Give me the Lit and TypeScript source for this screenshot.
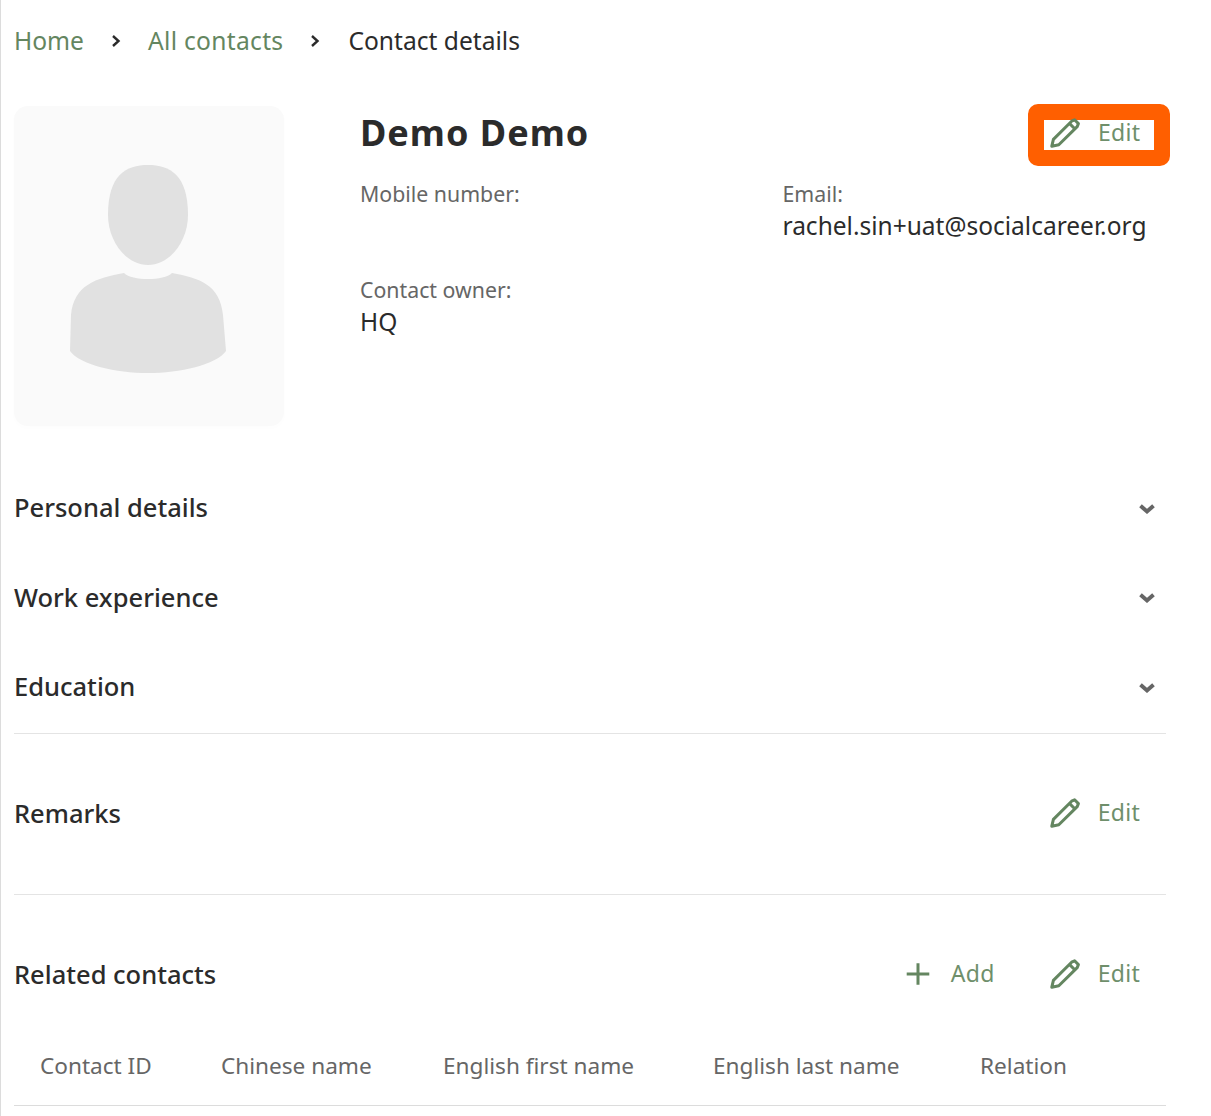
import { LitElement, html, css } from "lit";
import { customElement } from "lit/decorators.js";

const pencil = html`<svg class="ico" width="30" height="30" viewBox="0 0 30 30" fill="none" stroke="#648660" stroke-width="3" stroke-linejoin="round">
  <path d="M1.800 28.200 L3.400 21.400 L21.600 3.200 L24.600 1.800 L28.400 5.600 L27.200 8.600 L8.800 26.800 Z" />
  <path d="M19.400 5.400 L25 11" />
</svg>`;
const plus = html`<svg class="ico plus" width="26" height="26" viewBox="0 0 26 26" stroke="#648660" stroke-width="3" fill="none"><path d="M13 2.300V23.700M1.700 13H24.300"/></svg>`;
const chevron = html`<svg class="chev" width="16" height="10" viewBox="0 0 16 10" fill="none" stroke="#666" stroke-width="4"><path d="M1.500 1.800 L8 7.400 L14.500 1.800"/></svg>`;
const sep = html`<svg class="sep" width="10" height="14" viewBox="0 0 10 14" fill="none" stroke="#2b2b2b" stroke-width="2.400"><path d="M2 2 L7.500 7 L2 12"/></svg>`;

@customElement("app-root")
export class AppRoot extends LitElement {
  static styles = css`
    :host { display: block; height: 1116px; overflow: hidden; box-sizing: border-box; background: #fff;
      font-family: "Noto Sans", sans-serif; color: #2b2b2b; border-left: 1px solid #dcdcdc; }
    .page { width: 1152px; margin-left: 13px; }
    .crumbs { display: flex; align-items: center; height: 84px; font-size: 24.600px; padding-bottom: 3px; box-sizing: border-box; }
    .crumbs a { color: #648660; }
    .crumbs .wide { letter-spacing: .3px; }
    .sep { margin: 0 27px; }
    .sep + span { margin-left: 1px; }
    .top { display: flex; height: 322px; }
    .photo { width: 270px; height: 320px; margin-top: 22px; background: #fafafa; border-radius: 14px; display: flex; align-items: center; justify-content: center; box-shadow: 0 2px 6px rgba(0,0,0,.012); }
    .avatar { margin: 6px 2px 0 0; }
    .info { margin-left: 76px; flex: 1; }
    .head { display: flex; justify-content: space-between; }
    h1 { margin: 24px 0 0; font-size: 36px; line-height: 50px; font-weight: 700; letter-spacing: 1px; }
    .fields { display: grid; grid-template-columns: 422.500px 1fr; margin-top: 13px; }
    .label { font-size: 21.300px; line-height: 30px; color: #666; }
    .value { font-size: 24.500px; line-height: 34px; color: #2b2b2b; min-height: 34px; }
    .field { height: 96px; }
    .action { display: flex; align-items: center; color: #6f8f6b; font-size: 23px; letter-spacing: .3px; padding-bottom: 2px; }
    .action .ico { margin-right: 18px; margin-top: 2px; flex: none; }
    .action .plus { margin-right: 20px; }
    .edit-hi { margin: 20px -4px 0 0; border: 16px solid #ff5f00; border-radius: 10px; background: #fff; padding: 0 14px 6px 6px; width: 90px; box-sizing: content-box; height: 24px; }
    .section { display: flex; justify-content: space-between; align-items: center; font-size: 25.500px; font-weight: 500; color: #2b2b2b; height: 89.500px; padding-right: 11px; }
    .chev { margin-top: 3px; }
    .s1 { margin-top: 56.250px; }
    hr { border: 0; border-top: 1px solid #e4e4e4; margin: 0; }
    .hr1 { margin-top: 2.250px; }
    .row { display: flex; justify-content: space-between; align-items: center; box-sizing: border-box; font-size: 25.500px; font-weight: 500; height: 160px; padding-bottom: 2px; }
    .row.last { height: 130px; padding: 28px 0 0; }
    .actions { display: flex; gap: 55px; padding-right: 26px; font-weight: 400; }
    .thead { display: flex; box-sizing: border-box; font-size: 22.600px; color: #666; height: 81px; padding: 0 0 0 26px; align-items: center; border-bottom: 1px solid #dcdcdc; }
    .thead span { display: block; flex: none; }
  `;

  render() {
    const cols: [string, number][] = [["Contact ID", 181], ["Chinese name", 222], ["English first name", 270], ["English last name", 267], ["Relation", 100]];
    return html`<div class="page">
      <div class="crumbs"><a>Home</a>${sep}<a class="wide">All contacts</a>${sep}<span>Contact details</span></div>
      <div class="top">
        <div class="photo">
          <svg class="avatar" width="156" height="208" viewBox="0 0 156 208" fill="#e1e1e1">
            <path d="M78 0 C100 0 118 10 118 50 C118 76 100 100 78 100 C56 100 38 76 38 50 C38 10 56 0 78 0Z"/>
            <path d="M54 108 C62 116 94 116 102 108 C130 113 150 120 153 150 L156 186 C146 200 110 208 78 208 C46 208 10 200 0 186 L1 150 C4 120 26 113 54 108Z"/>
          </svg>
        </div>
        <div class="info">
          <div class="head"><h1>Demo Demo</h1>
            <div class="action edit-hi">${pencil}<span>Edit</span></div>
          </div>
          <div class="fields">
            <div class="field"><div class="label">Mobile number:</div><div class="value"></div></div>
            <div class="field"><div class="label">Email:</div><div class="value">rachel.sin+uat@socialcareer.org</div></div>
            <div class="field"><div class="label">Contact owner:</div><div class="value">HQ</div></div>
          </div>
        </div>
      </div>
      <div class="section s1"><span>Personal details</span>${chevron}</div>
      <div class="section"><span>Work experience</span>${chevron}</div>
      <div class="section"><span>Education</span>${chevron}</div>
      <hr class="hr1" />
      <div class="row"><span>Remarks</span><div class="actions"><div class="action">${pencil}<span>Edit</span></div></div></div>
      <hr />
      <div class="row last"><span>Related contacts</span><div class="actions"><div class="action">${plus}<span>Add</span></div><div class="action">${pencil}<span>Edit</span></div></div></div>
      <div class="thead">${cols.map(([t, w]) => html`<span style="width:${w}px">${t}</span>`)}</div>
    </div>`;
  }
}
